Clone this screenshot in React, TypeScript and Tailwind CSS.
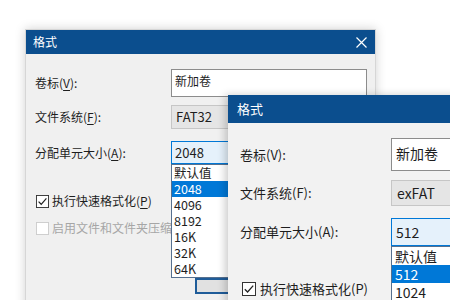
const font = "font-['Noto_Sans_CJK_SC','Noto_Sans',sans-serif]";

const Check = ({ size, checked, disabled }: { size: number; checked?: boolean; disabled?: boolean }) => (
  <svg width={size} height={size} viewBox="0 0 14 14" className="shrink-0">
    <rect x="0.5" y="0.5" width="13" height="13" fill="white" stroke={disabled ? "#cccccc" : "#333333"} />
    {checked && <path d="M2.8 7.2 L5.6 10 L11.2 3.6" fill="none" stroke="#222" strokeWidth="1.3" />}
  </svg>
);

const Mn = ({ pre, k, post = "):" }: { pre: string; k: string; post?: string }) => (
  <span>
    {pre}(<span className="underline underline-offset-2">{k}</span>{post}
  </span>
);

const FirstDialog = () => (
  <div className="absolute left-[25px] top-[29px] w-[351px] h-[290px] bg-[#f0f0f0] border border-[#d6d6d6] shadow-[0_0_10px_rgba(0,0,0,0.18)]">
    <div className="h-[24px] bg-[#0b4e8e] flex items-center justify-between pl-[7px] pr-[8px] text-white text-[12px]">
      <span>格式</span>
      <svg width="11" height="11" viewBox="0 0 11 11">
        <path d="M0.5 0.5 L10.5 10.5 M10.5 0.5 L0.5 10.5" stroke="white" strokeWidth="1.2" />
      </svg>
    </div>
    <div className="flex flex-col px-[9px] pt-[15px] text-[12px] text-[#1e1e1e]">
      <div className="flex h-[28px] items-center">
        <div className="w-[136px] shrink-0"><Mn pre="卷标" k="V" /></div>
        <div className="w-[196px] shrink-0 h-full bg-white border border-[#8c8c8c] pl-[3px] pt-[2px] text-[12px]">新加卷</div>
      </div>
      <div className="flex h-[24px] items-center mt-[8px]">
        <div className="w-[136px] shrink-0"><Mn pre="文件系统" k="F" /></div>
        <div className="w-[196px] shrink-0 h-full bg-[#e5e5e5] border border-[#c6c6c6] pl-[4px] flex items-center text-[13px]">FAT32</div>
      </div>
      <div className="flex h-[23px] items-center mt-[12px]">
        <div className="w-[136px] shrink-0"><Mn pre="分配单元大小" k="A" /></div>
        <div className="relative w-[196px] shrink-0 h-full">
          <div className="h-full bg-[#e5f1fb] border border-[#0078d7] pl-[3px] flex items-center text-[13px]">2048</div>
          <div className="absolute left-0 top-full w-full z-10 bg-white border border-[#56708f] text-[12.5px] leading-[16px]">
            {["默认值", "2048", "4096", "8192", "16K", "32K", "64K"].map((v) => (
              <div key={v} className={`h-[16px] pl-[2px] ${v === "2048" ? "bg-[#0078d7] text-white" : ""}`}>{v}</div>
            ))}
          </div>
        </div>
      </div>
      <div className="flex items-center gap-[3px] mt-[29px] h-[16px] pl-[1px]">
        <Check size={13} checked />
        <Mn pre="执行快速格式化" k="P" post=")" />
      </div>
      <div className="flex items-center gap-[3px] mt-[11px] h-[16px] pl-[1px] text-[#a6a6a6]">
        <Check size={13} disabled />
        <span>启用文件和文件夹压缩(E)</span>
      </div>
      <div className="ml-[160px] mt-[42px] w-[75px] h-[16px] bg-[#e1e1e1] border-2 border-[#1f5c99]" />
    </div>
  </div>
);

const SecondDialog = () => (
  <div className="absolute left-[228px] top-[95px] w-[260px] h-[230px] bg-[#f2f2f2] shadow-[-3px_0_8px_rgba(0,0,0,0.2)] z-20">
    <div className="h-[28px] bg-[#0b4e8e] flex items-center pl-[9px] text-white text-[13px]">格式</div>
    <div className="flex flex-col px-[12px] pt-[15px] text-[13px] text-[#1e1e1e]">
      <div className="flex h-[33px] items-center">
        <div className="w-[151px] shrink-0">卷标(V):</div>
        <div className="w-[110px] shrink-0 h-full bg-white border border-[#8c8c8c] pl-[4px] pt-[4px] text-[14px] leading-[20px]">新加卷</div>
      </div>
      <div className="flex h-[26px] items-center mt-[9px]">
        <div className="w-[151px] shrink-0">文件系统(F):</div>
        <div className="w-[110px] shrink-0 h-full bg-[#e5e5e5] border border-[#c6c6c6] pl-[5px] flex items-center text-[14px]">exFAT</div>
      </div>
      <div className="flex h-[28px] items-center mt-[12px]">
        <div className="w-[151px] shrink-0">分配单元大小(A):</div>
        <div className="relative w-[110px] shrink-0 h-full">
          <div className="h-full bg-[#e5f1fb] border border-[#0078d7] pl-[4px] flex items-center text-[14px]">512</div>
          <div className="absolute left-0 top-full w-full z-10 bg-white border border-[#56708f] text-[14px] leading-[18px]">
            {["默认值", "512", "1024"].map((v) => (
              <div key={v} className={`h-[18px] pl-[3px] ${v === "512" ? "bg-[#0078d7] text-white" : ""}`}>{v}</div>
            ))}
          </div>
        </div>
      </div>
      <div className="flex items-center gap-[4px] mt-[34px] h-[18px] pl-[2px]">
        <Check size={14} checked />
        <span>执行快速格式化(P)</span>
      </div>
    </div>
  </div>
);

export default function App() {
  return (
    <div className={`relative w-[450px] h-[300px] overflow-hidden bg-white ${font}`}>
      <FirstDialog />
      <SecondDialog />
    </div>
  );
}
